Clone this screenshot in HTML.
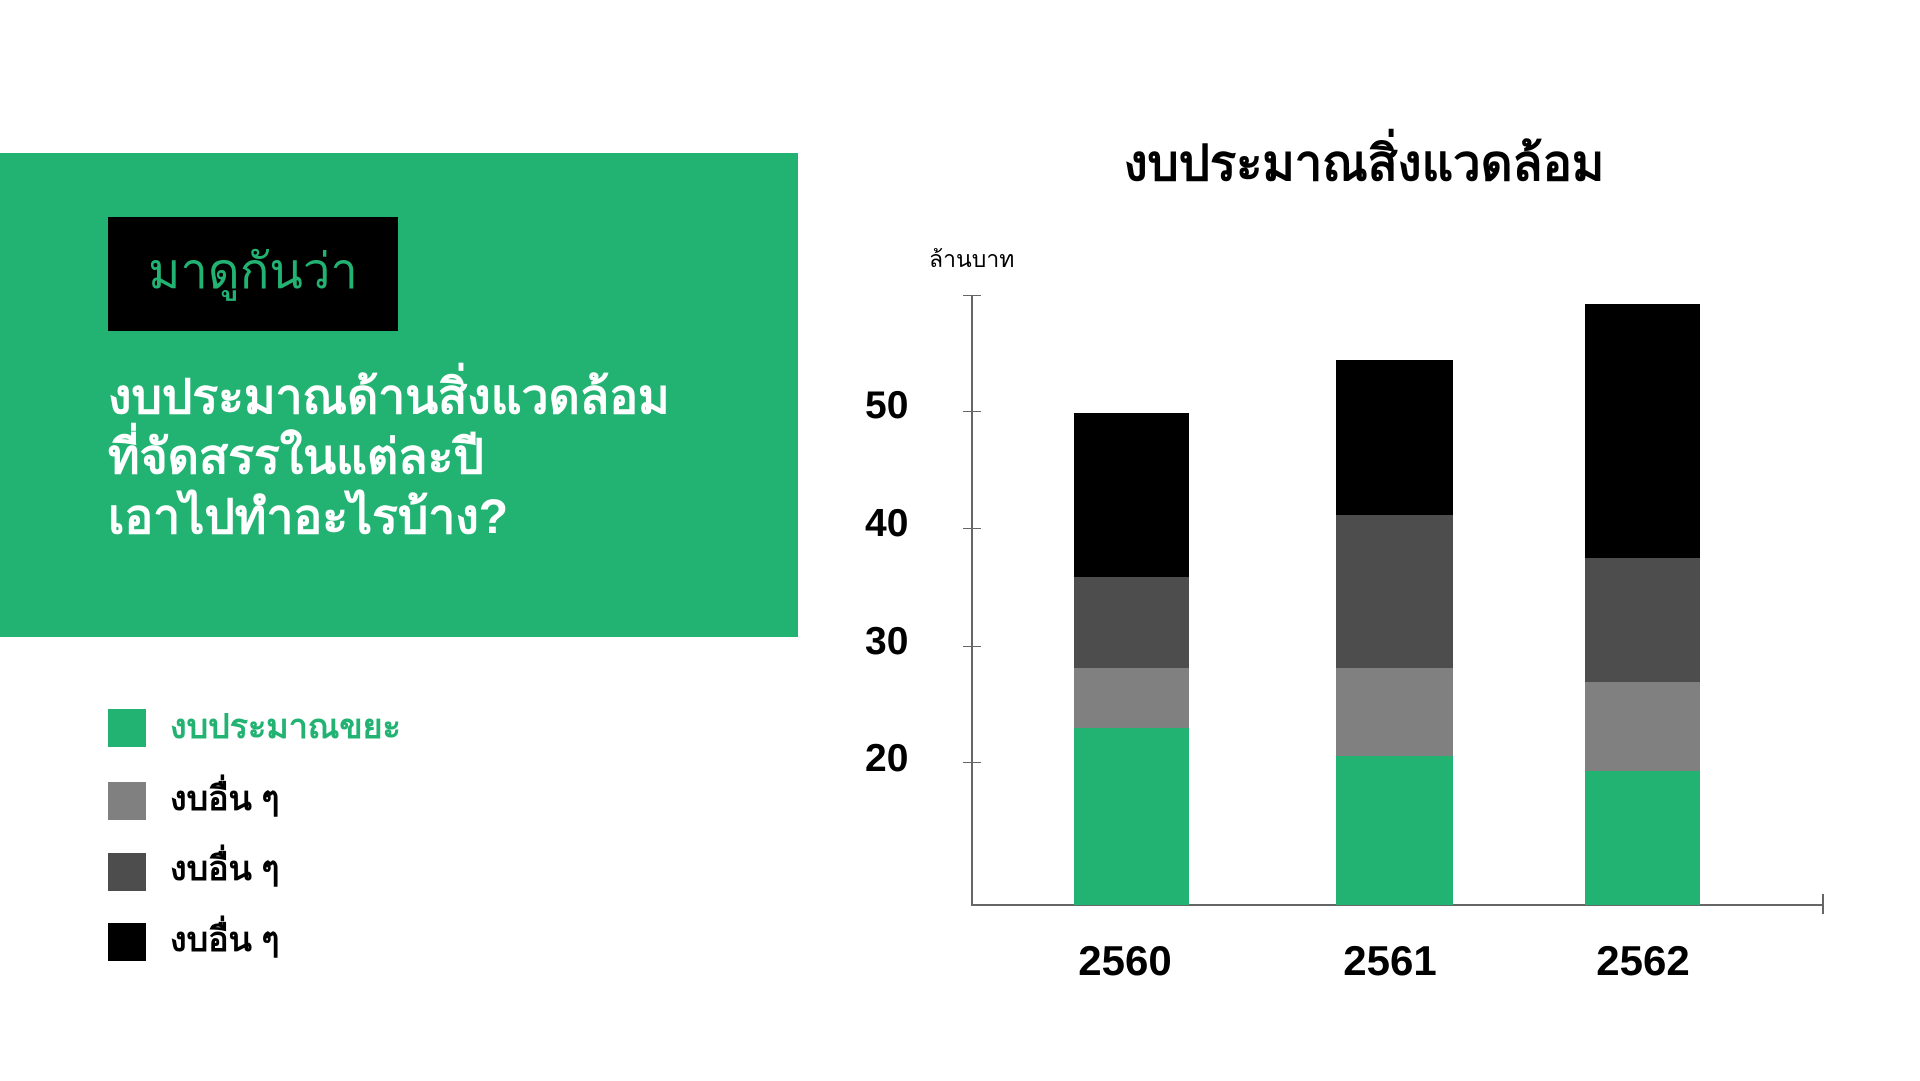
<!DOCTYPE html>
<html><head><meta charset="utf-8"><style>
body{margin:0;width:1920px;height:1081px;background:#fff;position:relative;overflow:hidden;font-family:"Liberation Sans","Noto Sans CJK SC",sans-serif}
.a{position:absolute}
.green{background:#22b373}
.g2{background:#808080}.g3{background:#4d4d4d}.bk{background:#000}
.lt{font-weight:bold;font-size:34px;color:#000;white-space:nowrap}
.yl{font-weight:bold;font-size:39px;width:60px;text-align:left}
.xl{font-weight:bold;font-size:42px;width:200px;text-align:center}
.tk{position:absolute;left:963px;width:18px;height:1px;background:#666}
</style></head><body>
<div class="a green" style="left:0;top:153px;width:798px;height:484px"></div>
<div class="a bk" style="left:108px;top:217px;width:290px;height:114px"></div>
<div class="a" style="left:108px;top:242px;width:290px;text-align:center;color:#22b373;font-size:49px;line-height:60px">มาดูกันว่า</div>
<div class="a" style="left:108px;top:368px;color:#fff;font-weight:bold;font-size:48px;line-height:60px;white-space:nowrap">งบประมาณด้านสิ่งแวดล้อม<br>ที่จัดสรรในแต่ละปี<br>เอาไปทำอะไรบ้าง?</div>

<div class="a green" style="left:108px;top:709px;width:38px;height:38px"></div>
<div class="a lt" style="left:170px;top:699px;color:#22b373">งบประมาณขยะ</div>
<div class="a g2" style="left:108px;top:782px;width:38px;height:38px"></div>
<div class="a lt" style="left:170px;top:771px">งบอื่น ๆ</div>
<div class="a g3" style="left:108px;top:853px;width:38px;height:38px"></div>
<div class="a lt" style="left:170px;top:841px">งบอื่น ๆ</div>
<div class="a bk" style="left:108px;top:923px;width:38px;height:38px"></div>
<div class="a lt" style="left:170px;top:912px">งบอื่น ๆ</div>

<div class="a" style="left:964px;width:800px;top:124px;text-align:center;font-weight:bold;font-size:49px">งบประมาณสิ่งแวดล้อม</div>
<div class="a" style="left:929px;top:242px;font-size:23px">ล้านบาท</div>

<div class="a" style="left:971px;top:295px;width:2px;height:611px;background:#666"></div>
<div class="a" style="left:971px;top:904px;width:852px;height:2px;background:#666"></div>
<div class="a" style="left:1822px;top:894px;width:2px;height:20px;background:#666"></div>
<div class="tk" style="top:295px"></div>
<div class="tk" style="top:411px"></div>
<div class="tk" style="top:528px"></div>
<div class="tk" style="top:646px"></div>
<div class="tk" style="top:762px"></div>
<div class="a yl" style="left:865px;top:384px">50</div>
<div class="a yl" style="left:865px;top:502px">40</div>
<div class="a yl" style="left:865px;top:620px">30</div>
<div class="a yl" style="left:865px;top:737px">20</div>

<div class="a bk" style="left:1074px;top:413px;width:115px;height:164px"></div>
<div class="a g3" style="left:1074px;top:577px;width:115px;height:91px"></div>
<div class="a g2" style="left:1074px;top:668px;width:115px;height:60px"></div>
<div class="a green" style="left:1074px;top:728px;width:115px;height:177px"></div>

<div class="a bk" style="left:1336px;top:360px;width:117px;height:155px"></div>
<div class="a g3" style="left:1336px;top:515px;width:117px;height:153px"></div>
<div class="a g2" style="left:1336px;top:668px;width:117px;height:88px"></div>
<div class="a green" style="left:1336px;top:756px;width:117px;height:149px"></div>

<div class="a bk" style="left:1585px;top:304px;width:115px;height:254px"></div>
<div class="a g3" style="left:1585px;top:558px;width:115px;height:124px"></div>
<div class="a g2" style="left:1585px;top:682px;width:115px;height:89px"></div>
<div class="a green" style="left:1585px;top:771px;width:115px;height:134px"></div>

<div class="a xl" style="left:1025px;top:937px">2560</div>
<div class="a xl" style="left:1290px;top:937px">2561</div>
<div class="a xl" style="left:1543px;top:937px">2562</div>
</body></html>
